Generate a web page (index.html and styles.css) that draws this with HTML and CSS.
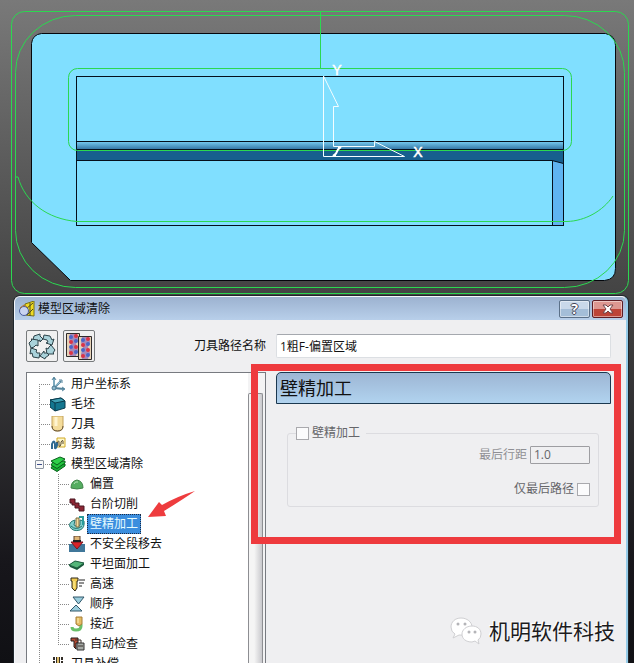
FILE: index.html
```html
<!DOCTYPE html>
<html lang="zh-CN">
<head>
<meta charset="utf-8">
<title>模型区域清除</title>
<link rel="stylesheet" href="styles.css">
</head>
<body>
<svg class="viewport" viewBox="0 0 634 296" aria-hidden="true">
  <defs>
    <linearGradient id="fillet" x1="0" y1="0" x2="0" y2="1">
      <stop offset="0" stop-color="#7bd2f6"/><stop offset="1" stop-color="#2f6f9f"/>
    </linearGradient>
  </defs>
  <path class="stock" d="M41.500 33.500H605.500Q615.500 35.500 615.500 45.500V268.500Q615.500 279.500 604.500 280.500H70.500L31.500 242.500V43.500Q32.500 34.500 41.500 33.500Z"/>
  <rect x="76" y="141" width="488" height="9" fill="url(#fillet)"/>
  <path d="M76 150H564V164L553 161H76Z" fill="#175f8e"/>
  <path d="M552.500 161L563.500 164V225.500H552.500Z" fill="#5fb4f1"/>
  <g class="edge">
    <rect x="76.500" y="76.500" width="487" height="149"/>
    <path d="M76 141.500H564M76 149.500H564M76 160.500H552L563.500 163.500M552.500 161V225"/>
  </g>
  <g class="toolpath">
    <rect x="11.500" y="11.500" width="617" height="282" rx="13"/>
    <rect x="15.500" y="15.500" width="609" height="272" rx="60" ry="57"/>
    <rect x="68.500" y="68.500" width="503" height="82" rx="9"/>
    <path d="M320.500 11.500V68.500M16 177H18C25 202 47 219 77 221.500H567C585 221 603 211 613 196"/>
  </g>
  <path class="axes" d="M323.500 76V156.500H404.500L374.500 141.500V146.500H333.500V106.500H338.500L323.500 76"/>
  <path class="z-mark" d="M333 156L336 153.500L338 149.500L341 147M333 155.500H336M338 147.500H341"/>
  <text class="axis-name" x="337" y="75">Y</text>
  <text class="axis-name" x="418" y="157">X</text>
</svg>

<main class="dialog">
  <header class="titlebar">
    <svg class="icon" viewBox="0 0 16 16" aria-hidden="true">
      <path d="M6 3L15 0V15L6 14Z" fill="#eedb22" stroke="#77701a"/>
      <path d="M7 8L14 2M8 14L14 8M11 2V15" stroke="#4e4a20"/>
      <circle cx="5" cy="10" r="4.500" fill="#c8d3ef" stroke="#495b9e"/>
      <path d="M1 7L5 4L8 6" fill="none" stroke="#b5762a"/>
    </svg>
    <h1>模型区域清除</h1>
    <button class="caption help" type="button" aria-label="帮助">?</button>
    <button class="caption close" type="button" aria-label="关闭">
      <svg viewBox="0 0 12 10" aria-hidden="true"><path d="M1 1H4L6 3L8 1H11L8 5L11 9H8L6 7L4 9H1L4 5Z" fill="#fff" stroke="#71454a"/></svg>
    </button>
  </header>

  <div class="columns namebar">
    <div class="tools">
      <button class="tool" type="button" aria-label="循环">
        <svg viewBox="0 0 30 30" aria-hidden="true">
          <g fill="#a9d2da" stroke="#2c4249" stroke-linejoin="round">
            <path d="M7 5L13 3V5L16 8L13 11V9L9 11L6 9Z"/>
            <path d="M17 4L23 5L25 9L27 8L25 14L19 12L21 11L20 9L16 8Z"/>
            <path d="M24 14L28 19L26 22L27 23H20L19 17L21 18L22 16Z"/>
            <path d="M22 24L18 27V28L13 25L17 20V22H20Z"/>
            <path d="M12 27L6 26L5 22L3 23L4 17L10 19L9 20L10 22L13 22Z"/>
            <path d="M4 17L2 12L5 9L4 8L11 9V15L9 14L7 16Z"/>
          </g>
        </svg>
      </button>
      <button class="tool" type="button" aria-label="复制">
        <svg viewBox="0 0 30 30" aria-hidden="true">
          <defs>
            <g id="swatch">
              <path d="M0.500 0.500H13.500V23.500H0.500Z" fill="#e6d3b8" stroke="#302b2b"/>
              <path d="M4 1H11L12 6L10 11L12 17L10 23H4L3 18L5 12L3 6Z" fill="#a789b8"/>
              <g fill="#4a66c8"><circle cx="5" cy="4" r="2"/><circle cx="10" cy="8" r="2"/><circle cx="5" cy="14" r="2"/><circle cx="10" cy="19" r="2"/></g>
              <g fill="#dc3445"><circle cx="10" cy="3" r="2"/><circle cx="5" cy="9" r="2"/><circle cx="10" cy="14" r="2"/><circle cx="5" cy="20" r="2"/></g>
            </g>
          </defs>
          <use href="#swatch" x="2" y="2"/>
          <use href="#swatch" x="14" y="5"/>
        </svg>
      </button>
      <label for="pathname">刀具路径名称</label>
    </div>
    <input class="pathname" id="pathname" type="text" value="1粗F-偏置区域">
  </div>

  <div class="columns content">
    <nav class="tree">
      <ul class="nodes">
        <li><span class="branch first"></span>
          <svg class="icon" viewBox="0 0 16 16"><g fill="none" stroke="#55859d" stroke-width="2"><path d="M4 2V12L14 13M4 12L11 5"/><path d="M2 4L4 1L6 4M9 4H12V7M12 11L15 13L12 15" stroke-width="1"/></g><path d="M4 3V11L10 6" fill="none" stroke="#a6cfe0"/><circle cx="4" cy="12" r="2" fill="#8db9cc" stroke="#4c7890"/></svg>
          <span class="name">用户坐标系</span></li>
        <li><span class="branch"></span>
          <svg class="icon" viewBox="0 0 16 16"><path d="M0 4L11 2L15 5V12L5 15L0 11Z" fill="#13768f" stroke="#0a3b4d"/><path d="M0 4L11 2L15 5L5 7Z" fill="#3fa0b4" stroke="#0a3b4d"/><path d="M5 7V15" stroke="#0a3b4d"/></svg>
          <span class="name">毛坯</span></li>
        <li><span class="branch"></span>
          <svg class="icon" viewBox="0 0 16 16"><path d="M2 0H13V10Q13 15 7.500 15Q2 15 2 10Z" fill="#f4dc9b" stroke="#c4a35c"/><path d="M6 1V10" stroke="#fff4d0" stroke-width="3"/><path d="M2 10Q2 15 7.500 15Q13 15 13 10" fill="none" stroke="#655235"/></svg>
          <span class="name">刀具</span></li>
        <li><span class="branch"></span>
          <svg class="icon" viewBox="0 0 16 16"><path d="M7 2H15V11H7Z" fill="#fff8c8" stroke="#d0a926"/><path d="M2 13V8Q4 3 5 8V12Q6 13 7 9V6" fill="none" stroke="#306a91" stroke-width="2"/><path d="M7 7Q9 3 9 7V10Q10 12 11 8V6Q13 3 13 5V8" fill="none" stroke="#584931"/></svg>
          <span class="name">剪裁</span></li>
        <li><button class="expander" type="button" aria-label="折叠"></button><span class="branch expanded"></span>
          <svg class="icon" viewBox="0 0 16 16"><g stroke="#08601b" stroke-linejoin="round"><path d="M1 12L3 9L15 8V10L7 15.500Z" fill="#18ad35"/><path d="M1 9L3 6L15 5V7L7 12.500Z" fill="#23c43f"/><path d="M1 5L10 1L15 3L7 9Z" fill="#2ed04a"/></g></svg>
          <span class="name">模型区域清除</span></li>
        <li><span class="trunk"></span><span class="branch"></span>
          <svg class="icon" viewBox="0 0 16 16"><path d="M2 12Q2 5 8 4Q14 5 14 12Q8 14 2 12Z" fill="#55ad61" stroke="#42844b"/><path d="M5 8Q6 5 9 6" fill="none" stroke="#b5e1b8"/></svg>
          <span class="name">偏置</span></li>
        <li><span class="trunk"></span><span class="branch"></span>
          <svg class="icon" viewBox="0 0 16 16"><path d="M1 3H6V7H10V10H15V15H10V12H6V9H3V7H1Z" fill="#8d2634" stroke="#481721"/></svg>
          <span class="name">台阶切削</span></li>
        <li class="selected"><span class="trunk"></span><span class="branch"></span>
          <svg class="icon" viewBox="0 0 16 16"><path d="M6 4Q-1 6 1 11Q4 16 11 14Q16 12 15 5L11 4V9Q8 12 5 9Z" fill="#81d1cf" stroke="#26756f"/><path d="M2 10Q7 15 13 10" fill="none" stroke="#26756f"/><path d="M7 2H10V11H7Z" fill="#f3dc9c" stroke="#76683e"/><path d="M10 1H14V9" fill="none" stroke="#299b9b" stroke-width="2"/></svg>
          <span class="name">壁精加工</span></li>
        <li><span class="trunk"></span><span class="branch"></span>
          <svg class="icon" viewBox="0 0 16 16"><path d="M0 8H4L8 12L12 8H16V16H0Z" fill="#40779a"/><path d="M5 0H11V6H5Z" fill="#dfb575" stroke="#5c412e"/><path d="M2 6H14L8 13Z" fill="#d92229" stroke="#751721"/><path d="M4 5H12" stroke="#202020" stroke-width="2"/></svg>
          <span class="name">不安全段移去</span></li>
        <li><span class="trunk"></span><span class="branch"></span>
          <svg class="icon" viewBox="0 0 16 16"><path d="M0 9L6 5L15 7V9L8 14L1 11Z" fill="#18593a"/><path d="M0 9L6 5L15 7L8 12Z" fill="#54b579" stroke="#235e42"/></svg>
          <span class="name">平坦面加工</span></li>
        <li><span class="trunk"></span><span class="branch"></span>
          <svg class="icon" viewBox="0 0 16 16"><path d="M2 2H9V5H8V12L6 15L3 12V5H2Z" fill="#f1cb51" stroke="#2e281b"/><path d="M10 4H16M10 7H15M10 10H13" stroke="#222"/><path d="M5 5V12" stroke="#fff3a1"/></svg>
          <span class="name">高速</span></li>
        <li><span class="trunk"></span><span class="branch"></span>
          <svg class="icon" viewBox="0 0 16 16"><path d="M4 1H15L9.500 8ZM1 15H13L7 9Z" fill="#9bcddd" stroke="#315669"/></svg>
          <span class="name">顺序</span></li>
        <li><span class="trunk"></span><span class="branch"></span>
          <svg class="icon" viewBox="0 0 16 16"><path d="M12 8V10Q12 14 7 14Q3 14 3 11" fill="none" stroke="#69c069" stroke-width="3"/><path d="M7 1H13V8L10 10L7 8Z" fill="#e4bc62" stroke="#a57c37"/><path d="M9 2V7" stroke="#fff1b7"/></svg>
          <span class="name">接近</span></li>
        <li><span class="trunk end"></span><span class="branch last"></span>
          <svg class="icon" viewBox="0 0 16 16"><path d="M2 2H9V7H7V13L5 11V5H2Z" fill="#b64c35" stroke="#241c1b"/><path d="M8 7H15V14H8Z" fill="#a6aaa6" stroke="#343333"/><path d="M6 4H12V7M9 10H14" stroke="#3a302d" fill="none"/></svg>
          <span class="name">自动检查</span></li>
        <li><span class="branch"></span>
          <svg class="icon" viewBox="0 0 16 16"><path d="M4 1V16M12 1V16" stroke="#332e28" stroke-width="2" stroke-dasharray="3 1"/><path d="M6.500 1V16M9.500 1V16" stroke="#332e28"/><path d="M8 1V16" stroke="#dfbd69" stroke-width="2"/></svg>
          <span class="name">刀具补偿</span></li>
      </ul>
      <div class="scrollbar"><div class="thumb"></div></div>
    </nav>

    <section class="page">
      <h2>壁精加工</h2>
      <fieldset>
        <legend><input type="checkbox" id="wall" disabled><label for="wall">壁精加工</label></legend>
        <div class="field"><label class="faint" for="stepover">最后行距</label><input class="number" id="stepover" type="text" value="1.0" disabled></div>
        <div class="field"><label for="lastonly">仅最后路径</label><input type="checkbox" id="lastonly" disabled></div>
      </fieldset>
    </section>
  </div>
</main>

<div class="callout"></div>
<svg class="pointer" viewBox="0 0 48 28" aria-hidden="true"><path d="M0 26L11 11L14 14Q30 5 47 0Q34 9 16 20L18 25Z" fill="#ee3c3e"/></svg>
<div class="watermark">
  <svg viewBox="0 0 32 28" aria-hidden="true">
    <g fill="#fff" stroke="#cfcfd2">
      <path d="M11 1C5 1 1 5 1 10Q1 15 5 17L3 21L9 18Q22 20 22 10C22 5 17 1 11 1Z"/>
      <path d="M22 9C16 9 12 13 12 17C12 22 16 25 22 25L25 24L29 27L28 23Q31 21 31 17C31 12 27 9 22 9Z"/>
    </g>
    <g fill="#b4b4b8"><circle cx="8" cy="7" r="1.500"/><circle cx="15" cy="7" r="1.500"/><circle cx="19" cy="15" r="1.500"/><circle cx="25" cy="15" r="1.500"/></g>
  </svg>
  <span>机明软件科技</span>
</div>
</body>
</html>
```
FILE: styles.css
```css
* { box-sizing: border-box; }

body {
  position: relative;
  display: flex;
  flex-direction: column;
  height: 100vh;
  margin: 0;
  overflow: hidden;
  background: linear-gradient(#797979, #444 44%, #17161b 85%, #101014);
  color: #111;
  font: 12px/20px "Open Sans", "Noto Sans CJK SC", sans-serif;
}

input, button { font: inherit; color: inherit; }
button { padding: 0; }

.viewport { display: block; flex: none; width: 100%; }
.stock { fill: #80dfff; stroke: #05070c; }
.edge { fill: none; stroke: #05101c; }
.toolpath { fill: none; stroke: #2bd850; }
.axes { fill: none; stroke: #f4fdff; }
.z-mark { fill: none; stroke: #fff; stroke-width: 2; }
.axis-name { fill: #fff; stroke: #fff; stroke-width: 0.5px; font: 14px "Liberation Sans", sans-serif; text-anchor: middle; }

.dialog {
  display: flex;
  flex: 1;
  flex-direction: column;
  min-height: 0;
  margin: 0 6px 0 14px;
  border: 1px solid #f3f6fb;
  border-right: 2px solid #95cbe8;
  border-bottom: 0;
  border-radius: 6px 6px 0 0;
  background: #efeff1;
  box-shadow: 0 0 0 1px #20272d;
}

.titlebar {
  display: flex;
  flex: none;
  align-items: center;
  height: 23px;
  padding: 0 3px 0 4px;
  border-radius: 5px 5px 0 0;
  background: linear-gradient(#9cb2d0, #b8cfea);
}
.icon { display: block; flex: none; width: 16px; height: 16px; }
h1 { flex: 1; margin: 0 0 0 3px; font-size: 12px; font-weight: 400; }

.caption {
  display: flex;
  align-items: center;
  justify-content: center;
  width: 31px;
  height: 18px;
  border: 1px solid #5b7088;
  border-radius: 2px;
  box-shadow: inset 0 0 0 1px rgb(255 255 255 / 45%);
}
.caption svg { width: 12px; height: 10px; }
.help {
  background: linear-gradient(#c9d9ea 50%, #a4bed8 50%);
  color: #fff;
  font-weight: 700;
  font-size: 14px;
  text-shadow: 1px 0 #445, -1px 0 #445, 0 1px #445, 0 -1px #445;
}
.close { margin-left: 2px; border-color: #5e1d25; background: linear-gradient(#dd9791 50%, #bd4438 50%); }

.columns {
  display: grid;
  grid-template-columns: 240px minmax(0, 1fr);
  column-gap: 10px;
  padding: 0 15px 0 11px;
}
.namebar { flex: none; align-items: center; height: 52px; }
.tools { display: flex; align-items: center; gap: 5px; }
.tools label { margin-left: auto; }
.tool { width: 32px; height: 32px; border: 1px solid #777a7c; border-radius: 2px; background: #f0f0f0; }
.tool svg { display: block; width: 30px; height: 30px; }
.pathname {
  width: 100%;
  height: 24px;
  padding: 0 3px;
  border: 1px solid #dcdfe3;
  border-top-color: #a5a8ae;
  border-radius: 2px;
  background: #fff;
}

.content { flex: 1; min-height: 0; }
.tree {
  display: flex;
  min-height: 0;
  overflow: hidden;
  border: 1px solid #777a80;
  border-bottom: 0;
  background: #fff;
}
.nodes { flex: 1; margin: 0; padding: 1px 0 0 12px; list-style: none; }
.nodes li { display: flex; align-items: center; height: 20px; }
.name { margin-left: 3px; padding: 0 2px; line-height: 18px; white-space: nowrap; }
.selected .name { margin-left: 2px; border: 1px dotted #1b2b45; background: #3b8ede; color: #e4fbff; }

.branch, .trunk {
  flex: none;
  align-self: stretch;
  background-image:
    repeating-linear-gradient(#888 0 1px, transparent 1px 2px),
    repeating-linear-gradient(90deg, #888 0 1px, transparent 1px 2px);
  background-position: 0 0, 0 10px;
  background-repeat: no-repeat;
}
.branch { width: 11px; background-size: 1px 100%, 100% 1px; }
.trunk { width: 19px; background-size: 1px 100%, 0 0; }
.branch.first { background-position: 0 10px, 0 10px; }
.branch.last { background-size: 1px 10px, 100% 1px; }
.expander {
  z-index: 1;
  width: 9px;
  height: 9px;
  margin: 0 -5px 0 -4px;
  border: 1px solid #8a93a0;
  border-radius: 1px;
  background: linear-gradient(#3d4e8a, #3d4e8a) center / 5px 1px no-repeat #f7f7f7;
}

.scrollbar { width: 17px; padding: 20px 2px 0 0; background: #f3f3f4; }
.thumb {
  height: 100%;
  border: 1px solid #8d8e92;
  border-bottom: 0;
  border-radius: 2px 2px 0 0;
  background: linear-gradient(90deg, #f5f5f5 40%, #c9c9cd);
}

h2 {
  height: 32px;
  margin: 0;
  padding-left: 3px;
  border: 1px solid #1b3850;
  border-radius: 5px 5px 0 0;
  background: linear-gradient(#9db6d4, #b1d3ef);
  font-size: 18px;
  font-weight: 400;
  line-height: 30px;
}
fieldset {
  display: flex;
  flex-direction: column;
  gap: 10px;
  margin: 19px 12px 0 11px;
  padding: 0 8px 5px;
  border: 1px solid #dcdce0;
  border-radius: 3px;
  color: #66666a;
}
legend { display: flex; align-items: center; gap: 3px; padding: 0 6px 0 0; }
.field { display: flex; align-items: center; justify-content: flex-end; gap: 3px; height: 24px; }
.faint { color: #8f8f94; }
input[type="checkbox"] {
  appearance: none;
  width: 13px;
  height: 13px;
  margin: 0;
  border: 1px solid #a9a9ad;
  background: #fbfbfc;
}
.number { width: 60px; height: 18px; padding: 0 3px; border: 1px solid #9d9da1; border-radius: 1px; background: #efeff1; }

/* Annotations drawn over the dialog */
.callout {
  position: absolute;
  top: 364px;
  right: 13px;
  left: 251px;
  height: 180px;
  border: 7px solid #ee3a3e;
  pointer-events: none;
}
.pointer { position: absolute; top: 491px; left: 148px; width: 48px; height: 28px; }
.watermark {
  position: absolute;
  right: 19px;
  bottom: 16px;
  display: flex;
  align-items: center;
  gap: 7px;
  color: #1c1c1e;
  font-size: 21px;
  line-height: 32px;
  text-shadow: -1px -1px #fff;
}
.watermark svg { width: 32px; height: 28px; }
```
